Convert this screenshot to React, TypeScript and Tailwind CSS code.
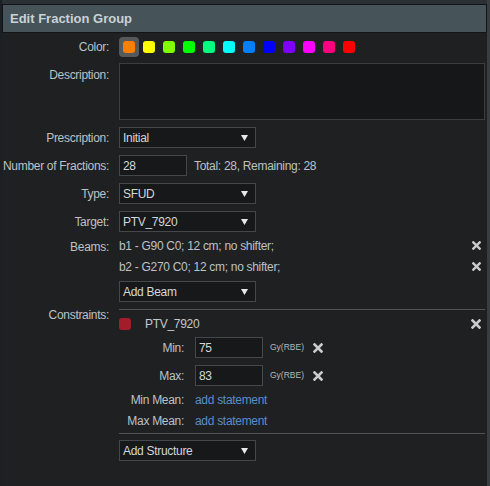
import type { ReactNode } from 'react'

const swatches = [
  '#ff7f00',
  '#ffff00',
  '#80ff00',
  '#00ff00',
  '#00ff80',
  '#00ffff',
  '#0080ff',
  '#0000ff',
  '#8000ff',
  '#ff00ff',
  '#ff0080',
  '#ff0000',
]

function Caret() {
  return (
    <svg width="7" height="6" viewBox="0 0 7 6" className="shrink-0">
      <path d="M0 0 H7 L3.5 6 Z" fill="#e6e8ea" />
    </svg>
  )
}

function CloseIcon({ size = 10 }: { size?: number }) {
  return (
    <svg width={size} height={size} viewBox="0 0 10 10" className="shrink-0">
      <path d="M1.5 1.5 L8.5 8.5 M8.5 1.5 L1.5 8.5" stroke="#c9cbcd" strokeWidth="2.6" strokeLinecap="square" />
    </svg>
  )
}

function Select({ value }: { value: string }) {
  return (
    <div className="w-[137px] h-[21px] bg-[#17181a] border border-[#45484b] flex items-center justify-between pl-[3px] pr-[7px] text-[#d3d7da]">
      <span>{value}</span>
      <Caret />
    </div>
  )
}

function Field({ label, children, top = 'center' }: { label: string; children: ReactNode; top?: 'center' | 'start' }) {
  return (
    <div className={`flex ${top === 'center' ? 'items-center' : 'items-start'}`}>
      <div className={`w-[107px] text-right shrink-0 ${top === 'start' ? 'pt-[3px]' : ''}`}>{label}</div>
      <div className="ml-[10px] flex-1">{children}</div>
    </div>
  )
}

export default function App() {
  return (
    <div
      className="w-[490px] h-[486px] bg-[#1f2022] border-l-2 border-l-[#1a1f24] border-r-[3px] border-r-[#3a3d40] flex flex-col text-[12px] tracking-[-0.3px] text-[#bcc2c6] overflow-hidden"
      style={{ fontFamily: '"Liberation Sans", Arial, sans-serif' }}
    >
      <div className="h-[4px] bg-[#2b3034] shrink-0" />
      <div className="h-[29px] bg-[#465358] border border-[#121517] flex items-center pl-[7px] shrink-0">
        <span className="text-[13px] font-bold tracking-normal text-[#c9d2d6]">Edit Fraction Group</span>
      </div>

      <div className="pr-[2px]">
        {/* Color */}
        <div className="mt-[4px]">
          <Field label="Color:">
            <div className="flex items-center">
              {swatches.map((c, i) => (
                <div
                  key={c}
                  className={`w-[20px] h-[20px] rounded-[4px] flex items-center justify-center ${i === 0 ? 'bg-[#56595c]' : ''}`}
                >
                  <div className="w-[12px] h-[12px] rounded-[3px]" style={{ backgroundColor: c }} />
                </div>
              ))}
            </div>
          </Field>
        </div>

        {/* Description */}
        <div className="mt-[6px]">
          <Field label="Description:" top="start">
            <div className="h-[57px] bg-[#161719] border border-[#3b3e41]" />
          </Field>
        </div>

        <div className="mt-[7px]">
          <Field label="Prescription:">
            <Select value="Initial" />
          </Field>
        </div>

        <div className="mt-[7px]">
          <Field label="Number of Fractions:">
            <div className="flex items-center">
              <div className="w-[68px] h-[21px] bg-[#17181a] border border-[#45484b] flex items-center pl-[3px] text-[#d3d7da]">
                28
              </div>
              <span className="ml-[7px]">Total: 28, Remaining: 28</span>
            </div>
          </Field>
        </div>

        <div className="mt-[7px]">
          <Field label="Type:">
            <Select value="SFUD" />
          </Field>
        </div>

        <div className="mt-[7px]">
          <Field label="Target:">
            <Select value="PTV_7920" />
          </Field>
        </div>

        {/* Beams */}
        <div className="mt-[3px]">
          <Field label="Beams:" top="start">
            <div className="flex flex-col">
              <div className="h-[21px] flex items-center justify-between pr-[4px]">
                <span>b1 - G90 C0; 12 cm; no shifter;</span>
                <CloseIcon size={9} />
              </div>
              <div className="h-[21px] flex items-center justify-between pr-[4px]">
                <span>b2 - G270 C0; 12 cm; no shifter;</span>
                <CloseIcon size={9} />
              </div>
              <div className="mt-[4px]">
                <Select value="Add Beam" />
              </div>
            </div>
          </Field>
        </div>

        {/* Constraints */}
        <div className="mt-[7px]">
          <div className="flex items-start">
            <div className="w-[107px] text-right shrink-0 -mt-[3px]">Constraints:</div>
            <div className="ml-[10px] flex-1 border-t border-[#505356]">
              <div className="h-[26px] flex items-center justify-between pr-[4px] mt-[1px]">
                <div className="flex items-center">
                  <div className="w-[12px] h-[12px] rounded-[3px] bg-[#a21c29]" />
                  <span className="ml-[14px] text-[#c3c8cc]">PTV_7920</span>
                </div>
                <CloseIcon />
              </div>

              {['Min:', 'Max:'].map((l, i) => (
                <div key={l} className={`flex items-center ${i === 1 ? 'mt-[7px]' : ''}`}>
                  <div className="w-[65px] text-right shrink-0">{l}</div>
                  <div className="ml-[11px] w-[68px] h-[21px] bg-[#17181a] border border-[#45484b] flex items-center pl-[3px] text-[#d3d7da]">
                    {i === 0 ? '75' : '83'}
                  </div>
                  <span className="ml-[7px] text-[8.5px] tracking-normal text-[#b3b8bb]">Gy(RBE)</span>
                  <span className="ml-[9px]">
                    <CloseIcon />
                  </span>
                </div>
              ))}

              <div className="mt-[3px] h-[21px] flex items-center">
                <div className="w-[65px] text-right shrink-0">Min Mean:</div>
                <span className="ml-[11px] text-[#5b8ccb]">add statement</span>
              </div>
              <div className="h-[21px] flex items-center">
                <div className="w-[65px] text-right shrink-0">Max Mean:</div>
                <span className="ml-[11px] text-[#5b8ccb]">add statement</span>
              </div>

              <div className="mt-[2px] border-t border-[#505356]" />
              <div className="mt-[6px]">
                <Select value="Add Structure" />
              </div>
            </div>
          </div>
        </div>
      </div>
    </div>
  )
}
